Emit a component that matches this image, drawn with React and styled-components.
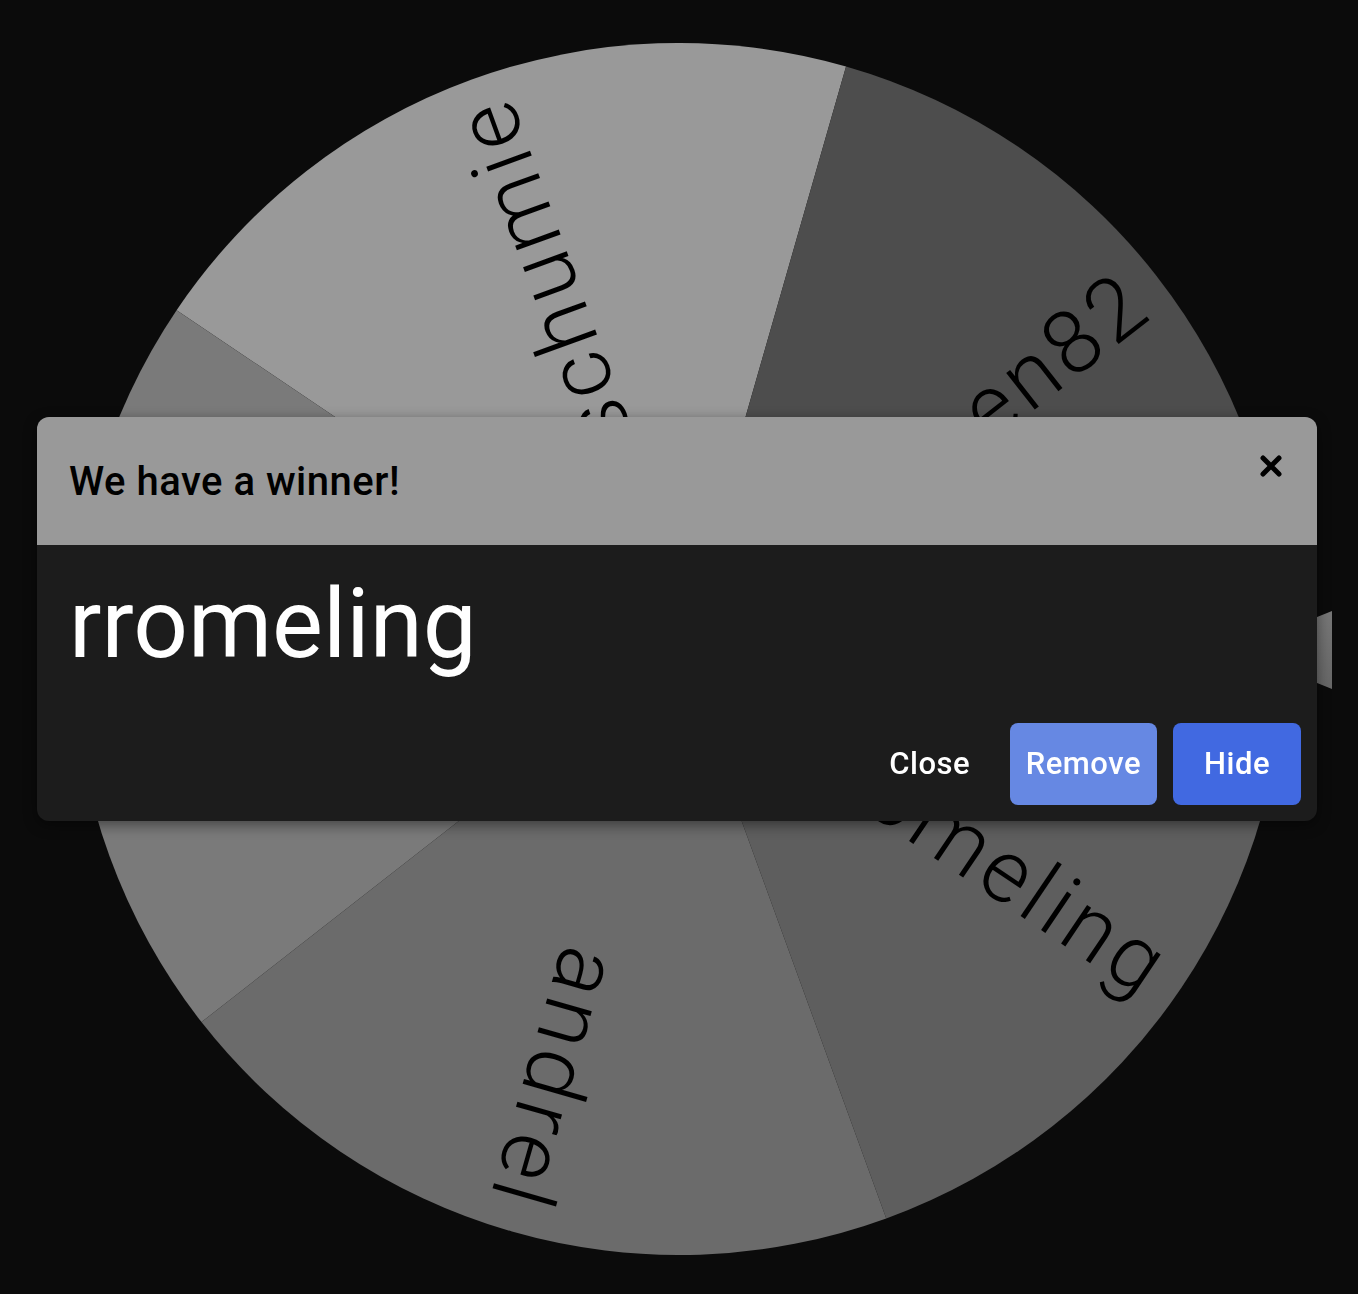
import React from 'react';
import styled, { createGlobalStyle } from 'styled-components';

const GlobalStyle = createGlobalStyle`
  html, body {
    margin: 0;
    padding: 0;
    background: #0b0b0b;
  }
  body {
    font-family: Roboto, "Liberation Sans", sans-serif;
    overflow: hidden;
  }
  * { box-sizing: border-box; }
`;

const RADIUS = 606;

// slices go clockwise, angles measured from 12 o'clock
const slices = [
  { name: 'schumie', from: -56, to: 16, color: '#999999' },
  { name: 'tobiasen82', from: 16, to: 88, color: '#4d4d4d' },
  { name: 'rromeling', from: 88, to: 160, color: '#5e5e5e' },
  { name: 'andrel', from: 160, to: 232, color: '#6b6b6b' },
  { name: 'mkuhn', from: 232, to: 304, color: '#7a7a7a' },
];

const Page = styled.div`
  width: 100vw;
  height: 100vh;
  padding-top: 4px;
  display: flex;
  align-items: center;
  justify-content: center;
`;

const WheelStage = styled.div`
  position: relative;
  width: ${RADIUS * 2}px;
  height: ${RADIUS * 2}px;
  flex-shrink: 0;
`;

const WheelSvg = styled.svg`
  display: block;
  width: 100%;
  height: 100%;
`;

const Label = styled.text`
  font-family: Roboto, "Liberation Sans", sans-serif;
  font-weight: 300;
  font-size: 88px;
  letter-spacing: 5px;
  fill: #000;
`;

/* the little marker on the right rim */
const Pointer = styled.div`
  position: absolute;
  right: -47px;
  top: 568px;
  width: 97px;
  height: 78px;
  background: linear-gradient(#777777, #676767);
  clip-path: polygon(0 50%, 100% 0, 100% 100%);
`;

const Backdrop = styled.div`
  position: fixed;
  inset: 0;
  padding: 0 4px 56px 0;
  display: flex;
  align-items: center;
  justify-content: center;
`;

const Dialog = styled.div`
  width: 1280px;
  border-radius: 12px;
  overflow: hidden;
  background: #1c1c1c;
  box-shadow: 0 4px 14px rgba(0, 0, 0, 0.45);
`;

const Header = styled.div`
  height: 128px;
  padding: 0 35px 0 32px;
  display: flex;
  justify-content: space-between;
  align-items: center;
  background: #999999;
`;

const Title = styled.h2`
  margin: 0;
  font-size: 40px;
  font-weight: 500;
  letter-spacing: 0.5px;
  color: #000;
  line-height: normal;
`;

const CloseIcon = styled.button`
  align-self: flex-start;
  margin-top: 38px;
  width: 22px;
  height: 22px;
  padding: 0;
  border: 0;
  background: none;
  display: flex;
  cursor: pointer;
`;

const Winner = styled.div`
  padding: 22px 32px 24px;
  font-size: 96px;
  font-weight: 400;
  line-height: 1.2;
  color: #ffffff;
`;

const Footer = styled.div`
  display: flex;
  justify-content: flex-end;
  gap: 16px;
  padding: 16px;
`;

const Button = styled.button`
  height: 82px;
  min-width: 128px;
  padding: 0 16px;
  border: 0;
  border-radius: 8px;
  font-family: inherit;
  font-size: 31px;
  font-weight: 500;
  letter-spacing: 0.5px;
  color: #ffffff;
  background: ${(p) => p.$bg || 'transparent'};
  cursor: pointer;
`;

const point = (deg) => {
  const r = (deg * Math.PI) / 180;
  return [RADIUS * Math.sin(r), -RADIUS * Math.cos(r)];
};

function Wheel() {
  return (
    <WheelSvg viewBox={`${-RADIUS} ${-RADIUS} ${RADIUS * 2} ${RADIUS * 2}`}>
      {slices.map((s) => {
        const [x1, y1] = point(s.from);
        const [x2, y2] = point(s.to);
        return (
          <path
            key={s.name + '-slice'}
            d={`M0 0 L${x1} ${y1} A${RADIUS} ${RADIUS} 0 0 1 ${x2} ${y2} Z`}
            fill={s.color}
          />
        );
      })}
      {slices.map((s) => {
        const mid = (s.from + s.to) / 2;
        return (
          <g key={s.name} transform={`rotate(${mid - 90})`}>
            <Label x={RADIUS - 24} y={0} textAnchor="end" dominantBaseline="central">
              {s.name}
            </Label>
          </g>
        );
      })}
    </WheelSvg>
  );
}

export default function App() {
  return (
    <>
      <GlobalStyle />
      <Page>
        <WheelStage>
          <Wheel />
          <Pointer />
        </WheelStage>
      </Page>
      <Backdrop>
        <Dialog>
          <Header>
            <Title>We have a winner!</Title>
            <CloseIcon aria-label="close">
              <svg width="22" height="22" viewBox="0 0 22 22">
                <path
                  d="M3 3 19 19M19 3 3 19"
                  stroke="#000"
                  strokeWidth="5"
                  strokeLinecap="round"
                />
              </svg>
            </CloseIcon>
          </Header>
          <Winner>rromeling</Winner>
          <Footer>
            <Button>Close</Button>
            <Button $bg="#6688e3">Remove</Button>
            <Button $bg="#4169e1">Hide</Button>
          </Footer>
        </Dialog>
      </Backdrop>
    </>
  );
}
